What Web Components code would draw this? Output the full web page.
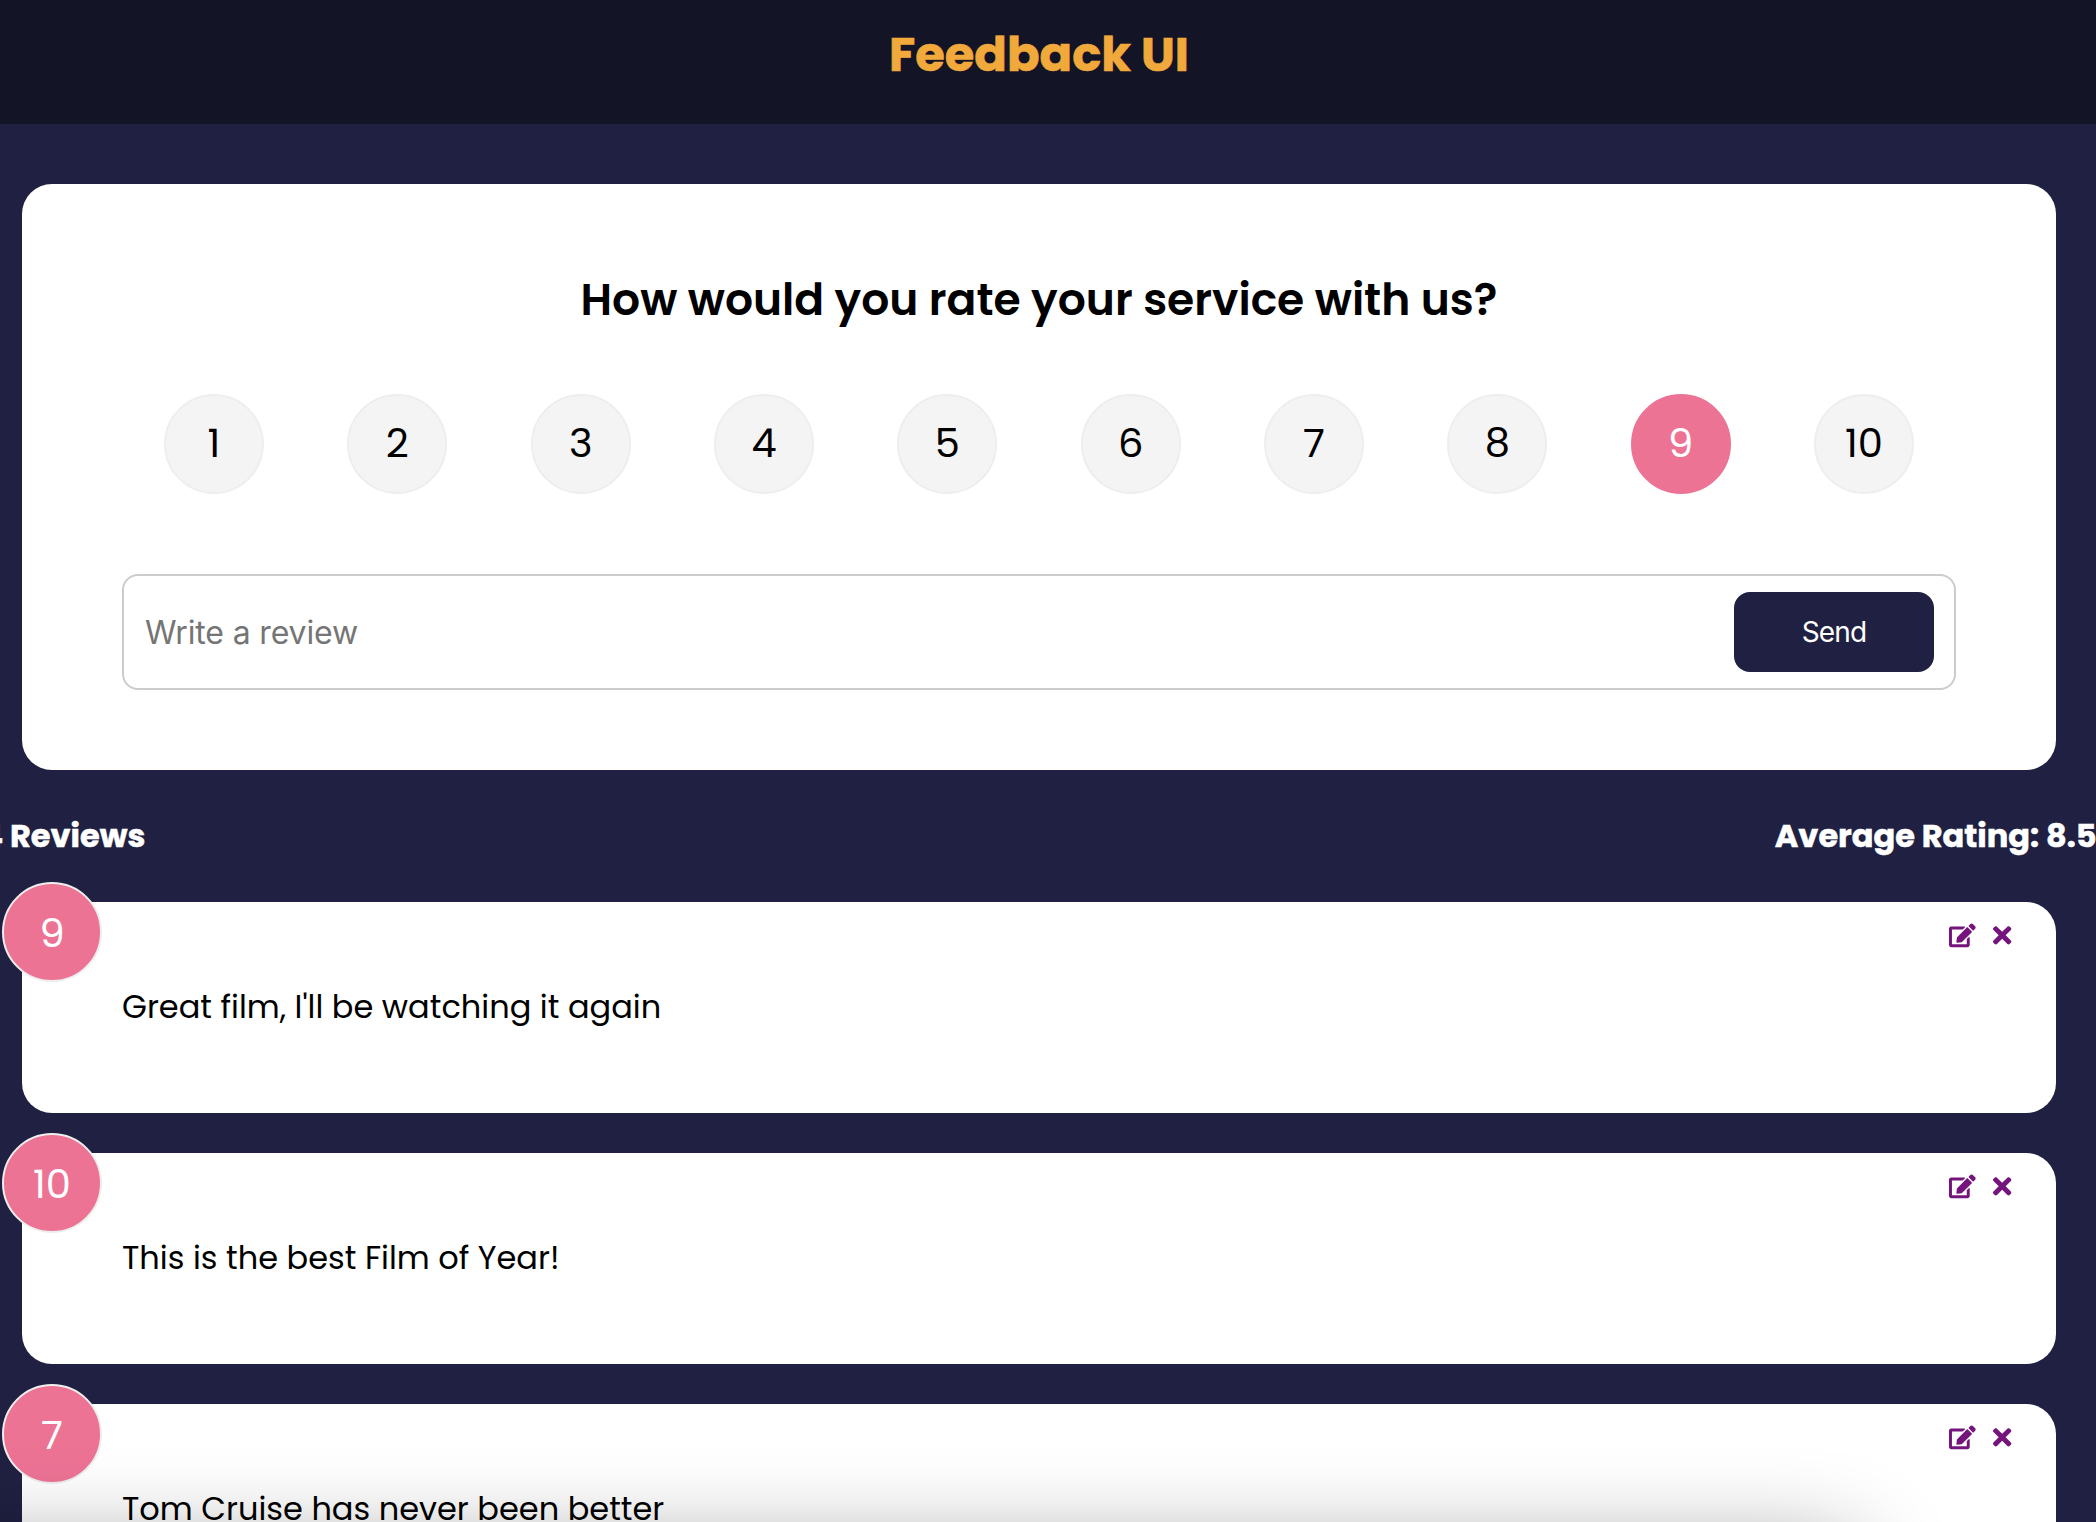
<!DOCTYPE html>
<html lang="en">
<head>
<meta charset="utf-8">
<title>Feedback UI</title>
<style>
  html, body { margin: 0; height: 1522px; overflow: hidden; background: #202142; }
  body { font-family: Poppins, Inter, "Liberation Sans", sans-serif; color: #000; }
</style>
</head>
<body>
<feedback-app></feedback-app>
<script>
class BaseElement extends HTMLElement {
  render(html) {
    if (!this.shadowRoot) this.attachShadow({ mode: 'open' });
    const t = document.createElement('template');
    t.innerHTML = html;
    this.shadowRoot.replaceChildren(t.content.cloneNode(true));
  }
}

/* One line of text tracked to an exact advance width. */
class TrackedText extends BaseElement {
  connectedCallback() {
    this.render(`<style>
      :host { display: block; white-space: pre; }
      span { display: inline-block; }
    </style><span></span>`);
    const span = this.shadowRoot.querySelector('span');
    const text = this.getAttribute('text');
    span.textContent = text;
    const target = parseFloat(this.getAttribute('width'));
    const spacing = (target - span.getBoundingClientRect().width) / text.length;
    span.style.letterSpacing = spacing.toFixed(3) + 'px';
  }
}
customElements.define('tracked-text', TrackedText);

class AppHeader extends BaseElement {
  connectedCallback() {
    this.render(`<style>
      :host { display: flex; justify-content: center; box-sizing: border-box; height: 124px; padding: 21px 18px 0 0; background: #131426; color: #f2a93b; }
      h1 { margin: 0; font-size: 48px; line-height: 67px; font-weight: 700; -webkit-text-stroke: .6px currentColor; }
    </style><h1><slot></slot></h1>`);
  }
}
customElements.define('app-header', AppHeader);

class UiCard extends BaseElement {
  connectedCallback() {
    this.render(`<style>
      :host { display: block; position: relative; box-sizing: border-box; background: #fff; border-radius: 30px; padding: 80px 100px; }
    </style><slot></slot>`);
  }
}
customElements.define('ui-card', UiCard);

class ScoreCircle extends BaseElement {
  connectedCallback() {
    this.render(`<style>
      :host { display: flex; align-items: center; justify-content: center; box-sizing: border-box; width: 100px; height: 100px; padding-bottom: 2px;
        border: 2px solid #eee; border-radius: 50%; background: #f4f4f4; font-size: 40px; line-height: 56px; }
      :host([selected]) { background: #ed7395; border-color: #ed7395; color: #fff; }
      :host([badge]) { background: #ed7395; border-color: #eee; color: #fff; padding: 2px 0 0; }
    </style><span><slot></slot></span>`);
  }
}
customElements.define('score-circle', ScoreCircle);

class RatingSelect extends BaseElement {
  connectedCallback() {
    const selected = Number(this.getAttribute('value'));
    let items = '';
    for (let i = 1; i <= 10; i++) items += `<score-circle${i === selected ? ' selected' : ''}>${i}</score-circle>`;
    this.render(`<style>:host { display: flex; justify-content: space-between; padding: 0 42px; }</style>${items}`);
  }
}
customElements.define('rating-select', RatingSelect);

class FeedbackForm extends BaseElement {
  connectedCallback() {
    this.render(`<style>
      :host { display: block; }
      ui-card { height: 586px; padding-top: 85px; }
      h2 { margin: 0; text-align: center; font-size: 44px; line-height: 61px; font-weight: 600; }
      rating-select { margin-top: 64px; }
      .group { display: flex; align-items: center; justify-content: space-between; box-sizing: border-box; height: 116px; margin-top: 80px;
        padding: 0 20px; border: 2px solid #ccc; border-radius: 16px; font-family: Inter, sans-serif; }
      .placeholder { color: #757575; font-size: 32px; line-height: 40px; padding: 1px 0 0 1px; }
      button { display: flex; align-items: center; justify-content: center; width: 200px; height: 80px; border: 0; border-radius: 16px; padding: 0;
        background: #202142; color: #fff; font: 400 28px/36px Inter, sans-serif; }
    </style>
    <ui-card>
      <h2>How would you rate your service with us?</h2>
      <rating-select value="9"></rating-select>
      <div class="group">
        <tracked-text class="placeholder" text="Write a review" width="213"></tracked-text>
        <button><tracked-text text="Send" width="64.5"></tracked-text></button>
      </div>
    </ui-card>`);
  }
}
customElements.define('feedback-form', FeedbackForm);

class FeedbackStats extends BaseElement {
  connectedCallback() {
    this.render(`<style>
      :host { display: flex; justify-content: space-between; font-size: 32px; line-height: 45px; font-weight: 700; color: #fff; -webkit-text-stroke: .5px currentColor; }
    </style>
    <span>4 Reviews</span>
    <span>Average Rating: 8.5</span>`);
  }
}
customElements.define('feedback-stats', FeedbackStats);

class FeedbackItem extends BaseElement {
  connectedCallback() {
    this.render(`<style>
      :host { display: block; }
      ui-card { height: 211px; padding: 82px 100px 0; font-size: 32px; line-height: 45px; }
      score-circle { position: absolute; left: -20px; top: -20px; }
      .actions { position: absolute; right: 44.5px; top: 20px; display: flex; align-items: center; gap: 17.3px; color: #75147c; }
      svg { display: block; height: 26.67px; fill: currentColor; }
      .edit { width: 26.67px; }
      .close { width: 18.33px; }
    </style>
    <ui-card>
      <score-circle badge>${this.getAttribute('rating')}</score-circle>
      <div class="actions">
        <svg class="edit" viewBox="0 0 576 512"><path d="M402.6 83.2l90.2 90.2c3.8 3.8 3.8 10 0 13.8L274.4 405.6l-92.8 10.3c-12.4 1.4-22.9-9.1-21.5-21.5l10.3-92.8L388.8 83.2c3.8-3.8 10-3.8 13.8 0zm162-22.9l-48.8-48.8c-15.2-15.2-39.9-15.2-55.2 0l-35.4 35.4c-3.8 3.8-3.8 10 0 13.8l90.2 90.2c3.8 3.8 10 3.8 13.8 0l35.4-35.4c15.2-15.3 15.2-40 0-55.2zM384 346.2V448H64V128h229.8c3.2 0 6.2-1.3 8.5-3.5l40-40c7.6-7.6 2.2-20.5-8.5-20.5H48C21.5 64 0 85.5 0 112v352c0 26.5 21.5 48 48 48h352c26.5 0 48-21.5 48-48V306.2c0-10.7-12.9-16-20.5-8.5l-40 40c-2.2 2.3-3.5 5.3-3.5 8.5z"/></svg>
        <svg class="close" viewBox="0 0 352 512"><path d="M242.72 256l100.07-100.07c12.28-12.28 12.28-32.19 0-44.48l-22.24-22.24c-12.28-12.28-32.19-12.28-44.48 0L176 189.28 75.93 89.21c-12.28-12.28-32.19-12.28-44.48 0L9.21 111.45c-12.28 12.28-12.28 32.19 0 44.48L109.28 256 9.21 356.07c-12.28 12.28-12.28 32.19 0 44.48l22.24 22.24c12.28 12.28 32.2 12.28 44.48 0L176 322.72l100.07 100.07c12.28 12.28 32.2 12.28 44.48 0l22.24-22.24c12.28-12.28 12.28-32.19 0-44.48L242.72 256z"/></svg>
      </div>
      <slot></slot>
    </ui-card>`);
  }
}
customElements.define('feedback-item', FeedbackItem);

class BottomShade extends BaseElement {
  connectedCallback() {
    this.render(`<style>
      :host { display: block; position: fixed; left: -300px; width: 2153px; top: 1555px; height: 400px; box-shadow: 0 0 90px rgba(0,0,0,.48); pointer-events: none; }
    </style>`);
  }
}
customElements.define('bottom-shade', BottomShade);

class FeedbackApp extends BaseElement {
  connectedCallback() {
    this.render(`<style>
      :host { display: block; height: 1522px; overflow: hidden; }
      main { padding: 60px 40px 0 22px; }
      feedback-stats { margin: 43px -40.5px 0 -40.5px; }
      .list { display: flex; flex-direction: column; gap: 40px; margin-top: 44px; }
    </style>
    <app-header>Feedback UI</app-header>
    <main>
      <feedback-form></feedback-form>
      <feedback-stats></feedback-stats>
      <div class="list">
        <feedback-item rating="9">Great film, I'll be watching it again</feedback-item>
        <feedback-item rating="10">This is the best Film of Year!</feedback-item>
        <feedback-item rating="7">Tom Cruise has never been better</feedback-item>
      </div>
    </main>
    <bottom-shade></bottom-shade>`);
  }
}
customElements.define('feedback-app', FeedbackApp);
</script>
</body>
</html>
